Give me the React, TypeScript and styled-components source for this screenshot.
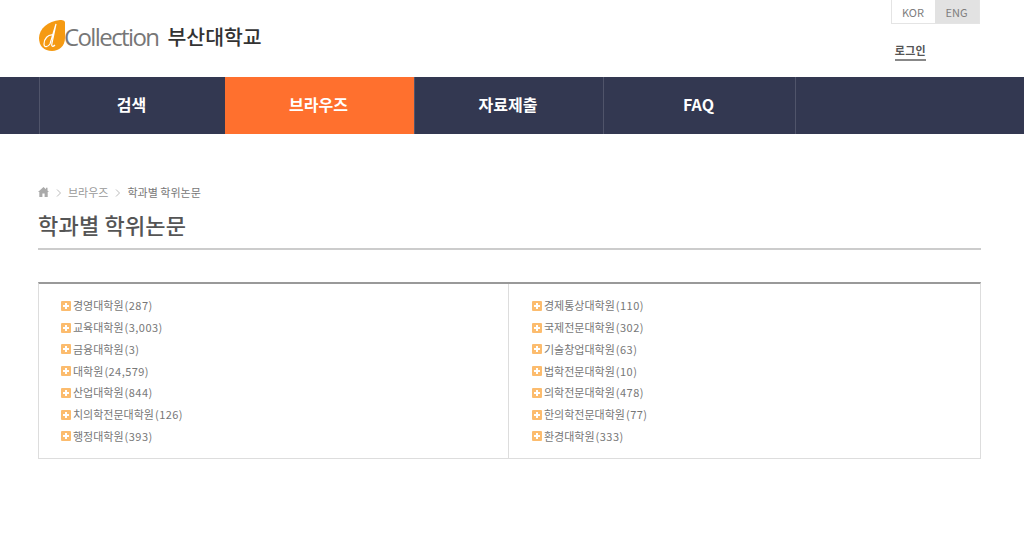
import React from 'react';
import styled, { createGlobalStyle } from 'styled-components';

const left = [
  { name: '경영대학원', count: '287' },
  { name: '교육대학원', count: '3,003' },
  { name: '금융대학원', count: '3' },
  { name: '대학원', count: '24,579' },
  { name: '산업대학원', count: '844' },
  { name: '치의학전문대학원', count: '126' },
  { name: '행정대학원', count: '393' },
];

const right = [
  { name: '경제통상대학원', count: '110' },
  { name: '국제전문대학원', count: '302' },
  { name: '기술창업대학원', count: '63' },
  { name: '법학전문대학원', count: '10' },
  { name: '의학전문대학원', count: '478' },
  { name: '한의학전문대학원', count: '77' },
  { name: '환경대학원', count: '333' },
];

const menu = [
  { label: '검색', width: 185 },
  { label: '브라우즈', width: 189, active: true },
  { label: '자료제출', width: 189 },
  { label: 'FAQ', width: 192 },
];

const GlobalStyle = createGlobalStyle`
  html, body {
    margin: 0;
    padding: 0;
    background: #fff;
    font-family: "Noto Sans CJK KR", "Noto Sans", sans-serif;
  }
`;

const Header = styled.header`
  width: 941px;
  height: 77px;
  margin-left: 39px;
  display: flex;
  justify-content: space-between;
`;

const Logo = styled.div`
  display: flex;
  align-items: center;
  height: 72px;
`;

const LogoType = styled.span`
  font-family: "Open Sans", sans-serif;
  font-weight: 400;
  font-size: 24px;
  letter-spacing: -1.6px;
  color: #777;
  margin-left: -3px;
`;

const LogoName = styled.span`
  font-size: 20.5px;
  font-weight: 500;
  color: #333;
  margin-left: 9px;
`;

const Util = styled.div`
  display: flex;
  flex-direction: column;
  align-items: flex-end;
`;

const LangGroup = styled.div`
  display: flex;
  height: 23px;
  border: 1px solid #e4e4e4;
  border-top: 0;
`;

const Lang = styled.span<{ $on?: boolean }>`
  width: ${p => (p.$on ? '44px' : '43px')};
  display: flex;
  align-items: center;
  justify-content: center;
  padding-right: 1px;
  box-sizing: border-box;
  font-size: 11px;
  color: #7d7d7d;
  background: ${p => (p.$on ? '#e2e2e2' : '#fff')};
`;

const Login = styled.a`
  margin: 18px 54px 0 0;
  font-size: 11px;
  font-weight: 700;
  letter-spacing: 0.3px;
  line-height: 16px;
  color: #555;
  border-bottom: 2px solid #888;
  padding-bottom: 1px;
`;

const Nav = styled.nav`
  height: 57px;
  background: #333851;
`;

const NavInner = styled.ul`
  width: 755px;
  height: 57px;
  margin: 0 0 0 39px;
  padding: 0;
  list-style: none;
  display: flex;
  border-left: 1px solid #50546a;
  border-right: 1px solid #50546a;
`;

const NavItem = styled.li<{ $width: number; $active?: boolean }>`
  width: ${p => p.$width}px;
  display: flex;
  align-items: center;
  justify-content: center;
  padding: 0 2px 4px 0;
  font-size: 16px;
  font-weight: 700;
  color: #fff;
  background: ${p => (p.$active ? '#ff702e' : 'transparent')};
  border-left: ${p => (p.$active ? '0' : '1px solid #50546a')};
  box-sizing: border-box;
  &:first-child { border-left: 0; }
`;

const Main = styled.main`
  width: 943px;
  margin: 0 0 0 38px;
  padding-top: 50px;
`;

const Crumbs = styled.div`
  display: flex;
  align-items: center;
  height: 16px;
  font-size: 11px;
  color: #999;
`;

const CrumbNow = styled.span`
  color: #777;
`;

const Sep = styled.svg`
  width: 5px;
  height: 8px;
  margin: 1px 7px 0 7px;
`;

const Title = styled.h2`
  margin: 10px 0 0;
  height: 38px;
  font-size: 22px;
  letter-spacing: 0.2px;
  line-height: 29px;
  font-weight: 500;
  color: #555;
  border-bottom: 2px solid #ccc;
`;

const ListBox = styled.div`
  margin-top: 32px;
  height: 174px;
  display: grid;
  grid-template-columns: 469px 1fr;
  border: 1px solid #ddd;
  border-top: 2px solid #999;
`;

const Column = styled.ul<{ $divider?: boolean }>`
  margin: 0;
  padding: 10.5px 0 0 ${p => (p.$divider ? '23px' : '22px')};
  list-style: none;
  ${p => (p.$divider ? 'border-left: 1px solid #ddd;' : '')}
`;

const Row = styled.li`
  display: flex;
  align-items: center;
  height: 21.75px;
  font-size: 11px;
  color: #777;
`;

const Count = styled.span`
  margin-left: 1px;
  letter-spacing: 0.45px;
`;

const Plus = styled.i`
  position: relative;
  width: 10px;
  height: 10px;
  margin: 1px 2px 0 0;
  background: #fcbc6e;
  border-radius: 1px;
  &::before, &::after {
    content: '';
    position: absolute;
    background: #fff;
  }
  &::before { left: 2px; top: 4px; width: 6px; height: 2px; }
  &::after { left: 4px; top: 2px; width: 2px; height: 6px; }
`;

const Chevron = () => (
  <Sep viewBox="0 0 5 8">
    <path d="M1 .5 4.500 4 1 7.500" fill="none" stroke="#bbb" strokeWidth="1" />
  </Sep>
);

const renderRows = (rows: { name: string; count: string }[]) =>
  rows.map(r => (
    <Row key={r.name}>
      <Plus />
      {r.name}
      <Count>({r.count})</Count>
    </Row>
  ));

const App: React.FC = () => (
  <>
    <GlobalStyle />
    <Header>
      <Logo>
        <svg width="28" height="32" viewBox="0 0 28 32">
          <path d="M0 18C0 9 9 1 21 0c4 0 5 1 5 3v15c0 8-6 13-13 13C5 31 0 26 0 18Z" fill="#f59a12" />
          <path d="M14 15c-5-1-9 4-9 9 0 4 4 3 6 0l6-20-4 19c-1 4 1 4 3 2" fill="none" stroke="#fff" strokeWidth="1.200" />
        </svg>
        <LogoType>Collection</LogoType>
        <LogoName>부산대학교</LogoName>
      </Logo>
      <Util>
        <LangGroup>
          <Lang>KOR</Lang>
          <Lang $on>ENG</Lang>
        </LangGroup>
        <Login>로그인</Login>
      </Util>
    </Header>
    <Nav>
      <NavInner>
        {menu.map(m => (
          <NavItem key={m.label} $width={m.width} $active={m.active}>
            {m.label}
          </NavItem>
        ))}
      </NavInner>
    </Nav>
    <Main>
      <Crumbs>
        <svg width="11" height="10" viewBox="0 0 11 10">
          <path d="M5.500 0 8 2.300V.8h1.500v2.800L11 5H9.700v5H6.600V6.500H4.400V10H1.300V5H0Z" fill="#aaa" />
        </svg>
        <Chevron />
        <span>브라우즈</span>
        <Chevron />
        <CrumbNow>학과별 학위논문</CrumbNow>
      </Crumbs>
      <Title>학과별 학위논문</Title>
      <ListBox>
        <Column>{renderRows(left)}</Column>
        <Column $divider>{renderRows(right)}</Column>
      </ListBox>
    </Main>
  </>
);

export default App;
